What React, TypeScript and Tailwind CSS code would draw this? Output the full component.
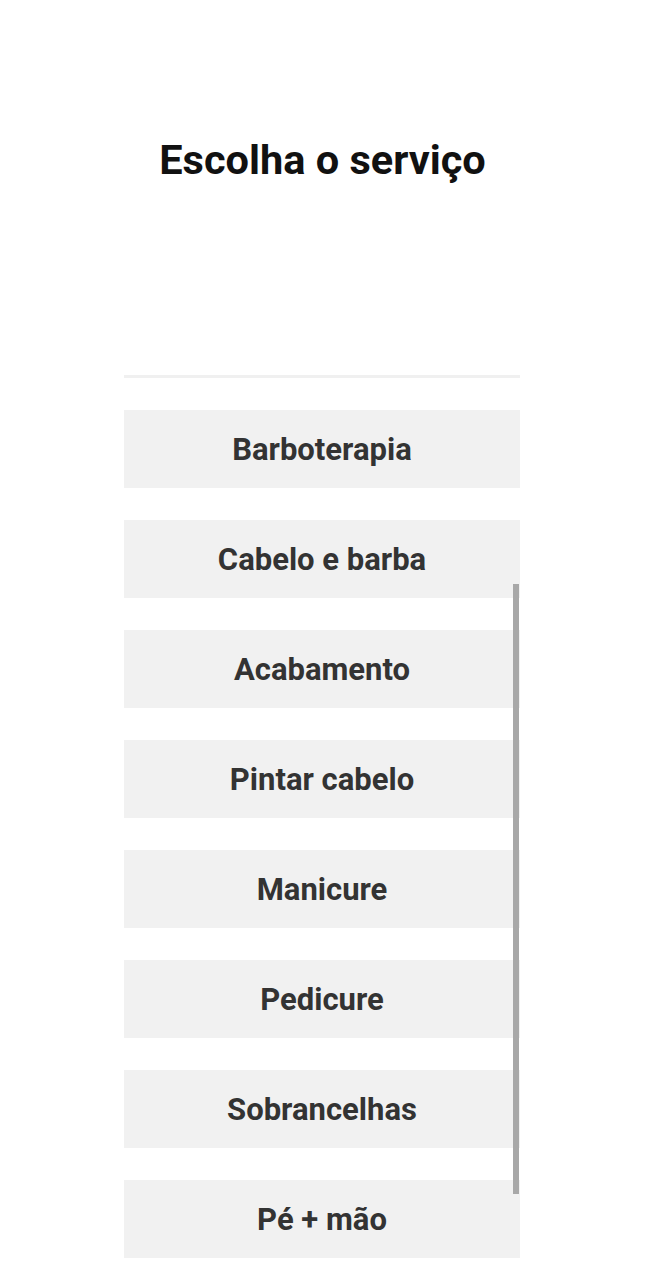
import React from "react";

const items = [
  "Barboterapia",
  "Cabelo e barba",
  "Acabamento",
  "Pintar cabelo",
  "Manicure",
  "Pedicure",
  "Sobrancelhas",
  "Pé + mão",
];

export default function App() {
  return (
    <div
      className="w-[645px] h-[1280px] bg-white overflow-hidden flex flex-col items-center"
      style={{ fontFamily: "Roboto, 'Liberation Sans', sans-serif" }}
    >
      <h1 className="mt-[136px] text-[41.5px] leading-[48px] font-bold text-[#111]">
        Escolha o serviço
      </h1>
      <div className="relative self-start ml-[124px] mt-[191px] w-[396px] border-t-[3px] border-[#f0f0f0] pt-[32px] flex flex-col gap-[32px]">
        {items.map((t) => (
          <div
            key={t}
            className="h-[78px] bg-[#f1f1f1] flex items-center justify-center pt-[3px] text-[31px] font-bold text-[#333]"
          >
            {t}
          </div>
        ))}
        <div className="absolute right-[1px] top-[206px] w-[6px] h-[610px] bg-[#a8a8a8]" />
      </div>
    </div>
  );
}
